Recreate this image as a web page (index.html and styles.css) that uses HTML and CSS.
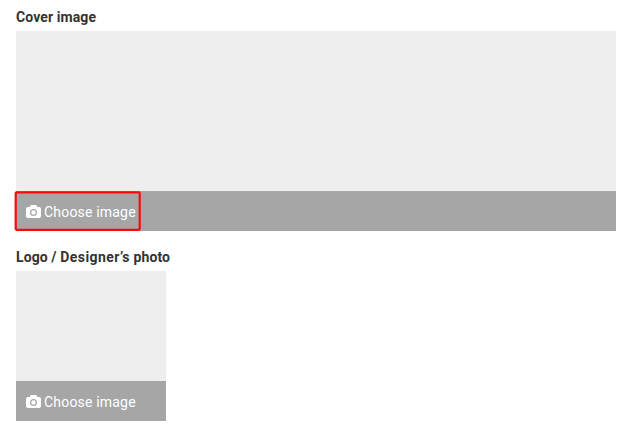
FILE: index.html
```html
<!DOCTYPE html>
<html lang="en">
<head>
<meta charset="utf-8">
<title>Shop images</title>
<link rel="stylesheet" href="styles.css">
</head>
<body>
<main class="form">
  <section class="field">
    <h2 class="label">Cover image</h2>
    <div class="upload upload-cover">
      <button class="choose" type="button">
        <svg class="camera" viewBox="0 0 15 13"><path fill-rule="evenodd" d="M5.500 0h4q1 0 1.300.8l.4 1.200H13q2 0 2 2v7q0 2-2 2H2q-2 0-2-2V4q0-2 2-2h1.800L4.200.8Q4.500 0 5.500 0ZM7.500 4a3.500 3.500 0 1 0 0 7a3.500 3.500 0 1 0 0-7Z"/><circle cx="7.500" cy="7.500" r="2.200"/></svg>
        <span>Choose image</span>
      </button>
      <svg class="highlight" viewBox="0 0 130 44"><rect x="2.700" y="3.300" width="124" height="37.500" rx="1"/></svg>
    </div>
  </section>
  <section class="field">
    <h2 class="label">Logo / <span class="wide">Designer’s</span> photo</h2>
    <div class="upload upload-logo">
      <button class="choose" type="button">
        <svg class="camera" viewBox="0 0 15 13"><path fill-rule="evenodd" d="M5.500 0h4q1 0 1.300.8l.4 1.200H13q2 0 2 2v7q0 2-2 2H2q-2 0-2-2V4q0-2 2-2h1.800L4.200.8Q4.500 0 5.500 0ZM7.500 4a3.500 3.500 0 1 0 0 7a3.500 3.500 0 1 0 0-7Z"/><circle cx="7.500" cy="7.500" r="2.200"/></svg>
        <span>Choose image</span>
      </button>
    </div>
  </section>
</main>
</body>
</html>
```
FILE: styles.css
```css
* { box-sizing: border-box; }
body { margin: 0; background: #fff; font: 14px/20px Roboto, sans-serif; }
.form { display: flex; flex-direction: column; gap: 16px; padding: 7px 16px; }
.label { margin: 0 0 4px; font-size: 14px; line-height: 20px; font-weight: 700; color: #333; letter-spacing: .1px; }
.wide { letter-spacing: .44px; }
.upload { position: relative; display: flex; align-items: flex-end; background: #eee; }
.upload-cover { width: 600px; height: 200px; }
.upload-logo { width: 150px; height: 150px; }
.choose { display: flex; align-items: center; gap: 3px; width: 100%; height: 40px; padding: 2px 10px 0; border: 0; background: #a6a6a6; color: #fff; font: inherit; letter-spacing: .19px; }
.camera { width: 15px; height: 13px; margin-bottom: 2px; fill: #fff; }
.highlight { position: absolute; left: -3px; top: 158px; width: 130px; height: 44px; fill: none; stroke: #fa0a0a; stroke-width: 2.200px; }
```
